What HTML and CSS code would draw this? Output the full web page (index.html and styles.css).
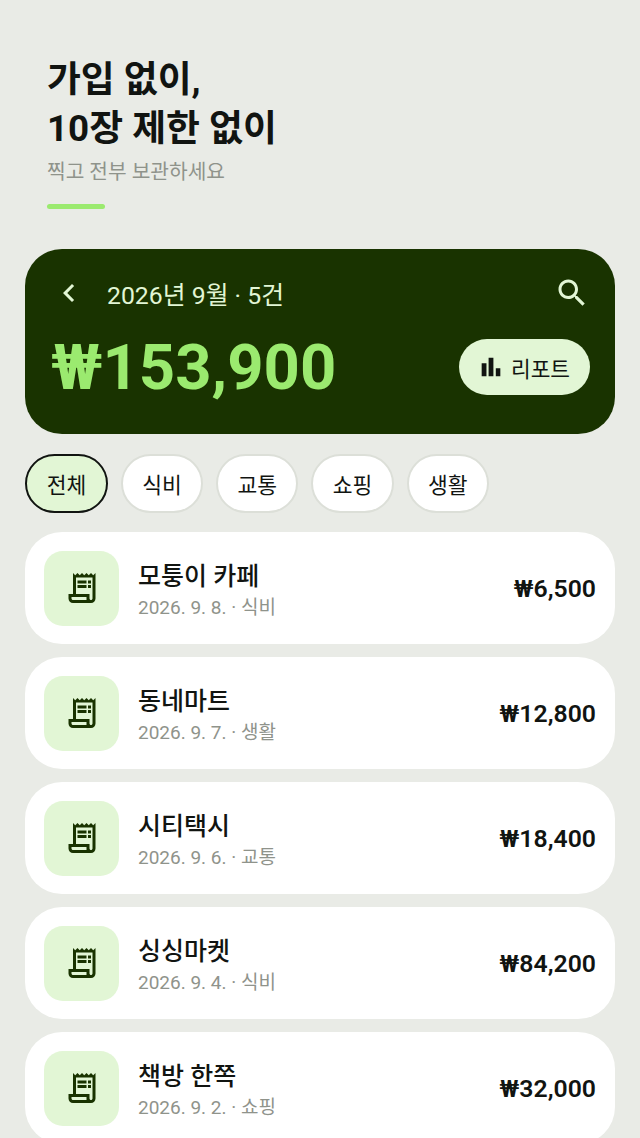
FILE: index.html
```html
<!DOCTYPE html>
<html lang="ko">
  <head>
    <meta charset="UTF-8" />
    <meta name="viewport" content="width=device-width, initial-scale=1.0" />
    <title>영수증</title>
    <link rel="stylesheet" href="styles.css">
  </head>
  <body>
    <div class="screen">
      <!-- Intro -->
      <div class="intro">
        <h1>가입 없이,<br />10장 제한 없이</h1>
        <p>찍고 전부 보관하세요</p>
        <div class="intro-bar"></div>
      </div>

      <!-- Month summary -->
      <div class="summary">
        <div class="summary-top">
          <svg class="summary-icon" viewBox="0 0 24 24"><path d="M15.41 7.41 14 6l-6 6 6 6 1.41-1.41L10.83 12z" /></svg>
          <span class="summary-date">2026년 9월 · 5건</span>
          <svg class="summary-icon" viewBox="0 0 24 24"><path d="M15.5 14h-.79l-.28-.27C15.41 12.59 16 11.11 16 9.5 16 5.91 13.09 3 9.5 3S3 5.91 3 9.5 5.91 16 9.5 16c1.61 0 3.09-.59 4.23-1.57l.27.28v.79l5 4.99L20.49 19l-4.99-5zm-6 0C7.01 14 5 11.99 5 9.5S7.01 5 9.5 5 14 7.01 14 9.5 11.99 14 9.5 14z" /></svg>
        </div>
        <div class="summary-bottom">
          <span class="summary-total">₩153,900</span>
          <button class="report-btn">
            <svg viewBox="0 0 24 24"><path d="M5 9.2h3.6V19H5zM10.2 5h3.6v14h-3.6zm5.4 8h3.4v6h-3.4z" /></svg>
            리포트
          </button>
        </div>
      </div>

      <!-- Filter chips -->
      <div class="chips">
        <div class="chip chip-active">전체</div>
        <div class="chip">식비</div>
        <div class="chip">교통</div>
        <div class="chip">쇼핑</div>
        <div class="chip">생활</div>
      </div>

      <!-- Receipts -->
      <div class="receipts">
        <div class="receipt">
          <div class="receipt-thumb"><svg viewBox="0 0 24 24"><use href="#receipt-icon" /></svg></div>
          <div class="receipt-info">
            <div class="receipt-name">모퉁이 카페</div>
            <div class="receipt-meta">2026. 9. 8. · 식비</div>
          </div>
          <div class="receipt-price">₩6,500</div>
        </div>
        <div class="receipt">
          <div class="receipt-thumb"><svg viewBox="0 0 24 24"><use href="#receipt-icon" /></svg></div>
          <div class="receipt-info">
            <div class="receipt-name">동네마트</div>
            <div class="receipt-meta">2026. 9. 7. · 생활</div>
          </div>
          <div class="receipt-price">₩12,800</div>
        </div>
        <div class="receipt">
          <div class="receipt-thumb"><svg viewBox="0 0 24 24"><use href="#receipt-icon" /></svg></div>
          <div class="receipt-info">
            <div class="receipt-name">시티택시</div>
            <div class="receipt-meta">2026. 9. 6. · 교통</div>
          </div>
          <div class="receipt-price">₩18,400</div>
        </div>
        <div class="receipt">
          <div class="receipt-thumb"><svg viewBox="0 0 24 24"><use href="#receipt-icon" /></svg></div>
          <div class="receipt-info">
            <div class="receipt-name">싱싱마켓</div>
            <div class="receipt-meta">2026. 9. 4. · 식비</div>
          </div>
          <div class="receipt-price">₩84,200</div>
        </div>
        <div class="receipt">
          <div class="receipt-thumb"><svg viewBox="0 0 24 24"><use href="#receipt-icon" /></svg></div>
          <div class="receipt-info">
            <div class="receipt-name">책방 한쪽</div>
            <div class="receipt-meta">2026. 9. 2. · 쇼핑</div>
          </div>
          <div class="receipt-price">₩32,000</div>
        </div>
      </div>
    </div>

    <svg class="icon-defs" aria-hidden="true">
      <symbol id="receipt-icon" viewBox="0 0 24 24">
        <path d="M19.5 3.5 18 2l-1.5 1.5L15 2l-1.5 1.5L12 2l-1.5 1.5L9 2 7.5 3.5 6 2v14H3v3c0 1.66 1.34 3 3 3h12c1.66 0 3-1.34 3-3V2l-1.5 1.5zM15 20H6c-.55 0-1-.45-1-1v-1h10v2zm4-1c0 .55-.45 1-1 1s-1-.45-1-1v-3H8V5h11v14z" />
        <path d="M9 7h6v2H9zm7 0h2v2h-2zM9 10h6v2H9zm7 0h2v2h-2z" />
      </symbol>
    </svg>
  </body>
</html>
```

FILE: styles.css
```css
* {
  box-sizing: border-box;
}
html,
body {
  margin: 0;
  height: 1138px;
  overflow: hidden;
}
body {
  background-color: #e9ebe6;
  font-family: Roboto, "Noto Sans CJK KR", sans-serif;
  color: #111411;
}
.screen {
  padding: 56px 25px 0;
}
.icon-defs {
  display: none;
}

.intro {
  padding: 0 22px;
}
.intro h1 {
  margin: 0;
  font-size: 36.8px;
  font-weight: 700;
  line-height: 48.5px;
}
.intro p {
  margin: 4px 0 0;
  font-size: 20.3px;
  line-height: 30px;
  color: #8f938b;
}
.intro-bar {
  width: 58px;
  height: 5px;
  margin-top: 17px;
  border-radius: 3px;
  background-color: #9bea6f;
}

.summary {
  height: 185px;
  margin-top: 40px;
  padding: 26px 25px 0 26px;
  border-radius: 37px;
  background-color: #193300;
}
.summary-top {
  display: flex;
  align-items: center;
  height: 36px;
}
.summary-icon {
  flex: none;
  width: 36px;
  height: 36px;
  fill: #e2f6d5;
}
.summary-date {
  flex: 1;
  margin-left: 20px;
  font-size: 24.8px;
  color: #e2f6d5;
}
.summary-bottom {
  display: flex;
  align-items: center;
  justify-content: space-between;
  margin-top: 28px;
}
.summary-total {
  font-size: 63.4px;
  font-weight: 700;
  line-height: 56px;
  color: #9bea6f;
}
.report-btn {
  display: flex;
  align-items: center;
  gap: 4px;
  height: 56px;
  padding: 0 20px 0 16px;
  border: none;
  border-radius: 28px;
  background-color: #e2f6d5;
  font-family: inherit;
  font-size: 21.4px;
  color: #111411;
}
.report-btn svg {
  width: 32px;
  height: 32px;
  fill: #111411;
}

.chips {
  display: flex;
  gap: 13px;
  margin-top: 20px;
}
.chip {
  display: flex;
  align-items: center;
  justify-content: center;
  width: 82.2px;
  height: 59px;
  padding-bottom: 1px;
  border: 2px solid #dcdfd8;
  border-radius: 30px;
  background-color: #fff;
  font-size: 21.5px;
}
.chip-active {
  width: 83px;
  border-color: #111411;
  background-color: #e2f6d5;
}

.receipts {
  display: flex;
  flex-direction: column;
  gap: 13px;
  margin-top: 19px;
}
.receipt {
  display: flex;
  align-items: center;
  flex: none;
  height: 112px;
  padding: 0 19px;
  border-radius: 37px;
  background-color: #fff;
}
.receipt-thumb {
  display: flex;
  align-items: center;
  justify-content: center;
  flex: none;
  width: 75px;
  height: 75px;
  border-radius: 19px;
  background-color: #e2f6d5;
}
.receipt-thumb svg {
  width: 36px;
  height: 36px;
  fill: #193300;
}
.receipt-info {
  flex: 1;
  margin-left: 19px;
  padding-top: 3px;
}
.receipt-name {
  font-size: 25px;
  font-weight: 500;
  line-height: 36px;
}
.receipt-meta {
  font-size: 19px;
  line-height: 26px;
  color: #8f938b;
}
.receipt-price {
  font-size: 24.8px;
  font-weight: 600;
}
```
